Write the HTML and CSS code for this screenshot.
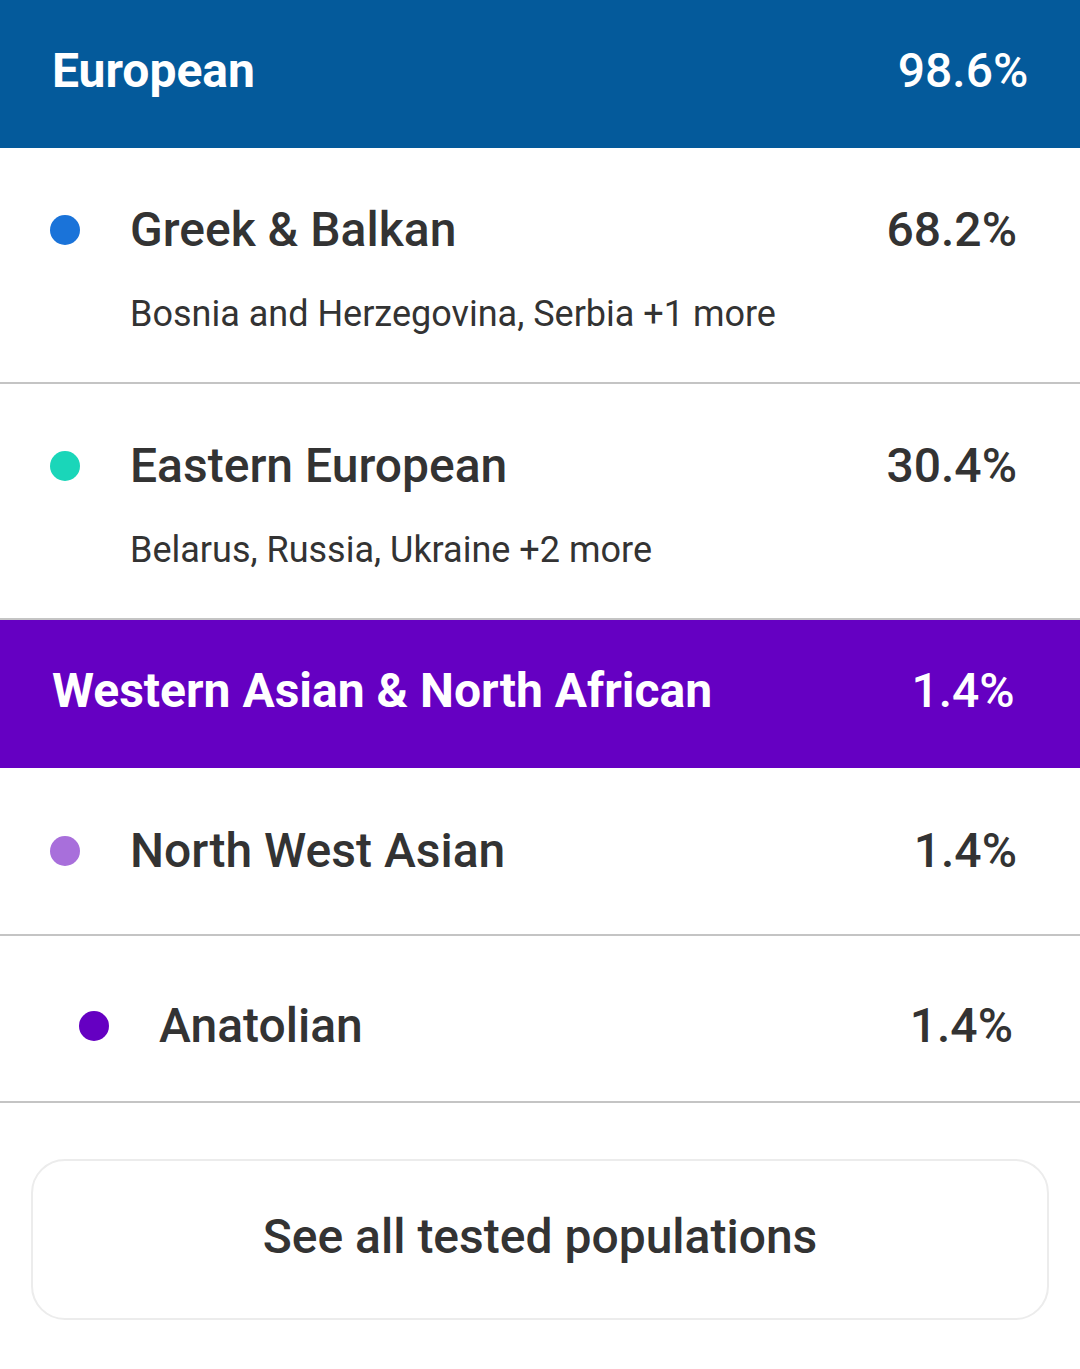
FILE: index.html
```html
<!DOCTYPE html>
<html>
<head>
<meta charset="utf-8">
<link rel="stylesheet" href="styles.css">
</head>
<body>
<div class="page">
  <div class="group group-blue">
    <span class="group-name">European</span>
    <span class="group-pct">98.6%</span>
  </div>
  <div class="row">
    <div class="row-main">
      <span class="dot dot-blue"></span>
      <span class="row-name">Greek &amp; Balkan</span>
      <span class="row-pct">68.2%</span>
    </div>
    <div class="row-sub">Bosnia and Herzegovina, Serbia +1 more</div>
  </div>
  <div class="row">
    <div class="row-main">
      <span class="dot dot-teal"></span>
      <span class="row-name">Eastern European</span>
      <span class="row-pct">30.4%</span>
    </div>
    <div class="row-sub">Belarus, Russia, Ukraine +2 more</div>
  </div>
  <div class="group group-purple">
    <span class="group-name">Western Asian &amp; North African</span>
    <span class="group-pct">1.4%</span>
  </div>
  <div class="row row-single">
    <div class="row-main">
      <span class="dot dot-lilac"></span>
      <span class="row-name">North West Asian</span>
      <span class="row-pct">1.4%</span>
    </div>
  </div>
  <div class="row row-single row-nested">
    <div class="row-main">
      <span class="dot dot-violet"></span>
      <span class="row-name">Anatolian</span>
      <span class="row-pct">1.4%</span>
    </div>
  </div>
  <div class="actions">
    <button class="see-all">See all tested populations</button>
  </div>
</div>
</body>
</html>
```

FILE: styles.css
```css
* { box-sizing: border-box; }
html, body { margin: 0; padding: 0; background: #ffffff; }
body {
  font-family: Roboto, "Noto Sans", "Liberation Sans", sans-serif;
  color: #333333;
  width: 1080px;
}
.page { width: 1080px; }

.group {
  display: flex;
  align-items: center;
  justify-content: space-between;
  color: #ffffff;
  padding: 0 42px 7px 52px;
  height: 148px;
}
.group-blue { background: #045a9b; }
.group-purple { background: #6500c2; }
.group-name {
  font-size: 48px;
  font-weight: 700;
  line-height: 56px;
}
.group-pct {
  font-size: 48px;
  font-weight: 500;
  line-height: 56px;
  width: 150px;
  text-align: center;
}

.row {
  border-bottom: 2px solid #c4c4c4;
  padding: 54px 63px 48px 50px;
}
.row-single { padding-top: 55px; padding-bottom: 55px; }
.row-nested { padding: 62px 67px 47px 79px; }
.row-main {
  display: flex;
  align-items: center;
  height: 56px;
}
.dot {
  width: 30px;
  height: 30px;
  border-radius: 50%;
  flex: none;
  margin-right: 50px;
}
.dot-blue { background: #1a73d9; }
.dot-teal { background: #1ad6b9; }
.dot-lilac { background: #a86fdb; }
.dot-violet { background: #6500c2; }
.row-name {
  flex: 1;
  font-size: 48px;
  font-weight: 500;
  line-height: 56px;
}
.row-pct {
  font-size: 48px;
  font-weight: 500;
  line-height: 56px;
}
.row-sub {
  margin-top: 36px;
  margin-left: 80px;
  font-size: 36px;
  line-height: 40px;
  font-weight: 400;
}

.actions {
  padding: 56px 31px 48px 31px;
}
.see-all {
  display: block;
  width: 100%;
  height: 161px;
  background: #ffffff;
  border: 2px solid #ececec;
  border-radius: 34px;
  font-family: Roboto, "Noto Sans", "Liberation Sans", sans-serif;
  font-size: 48px;
  font-weight: 500;
  line-height: 56px;
  color: #333333;
  padding: 0 0 6px 0;
}
```
